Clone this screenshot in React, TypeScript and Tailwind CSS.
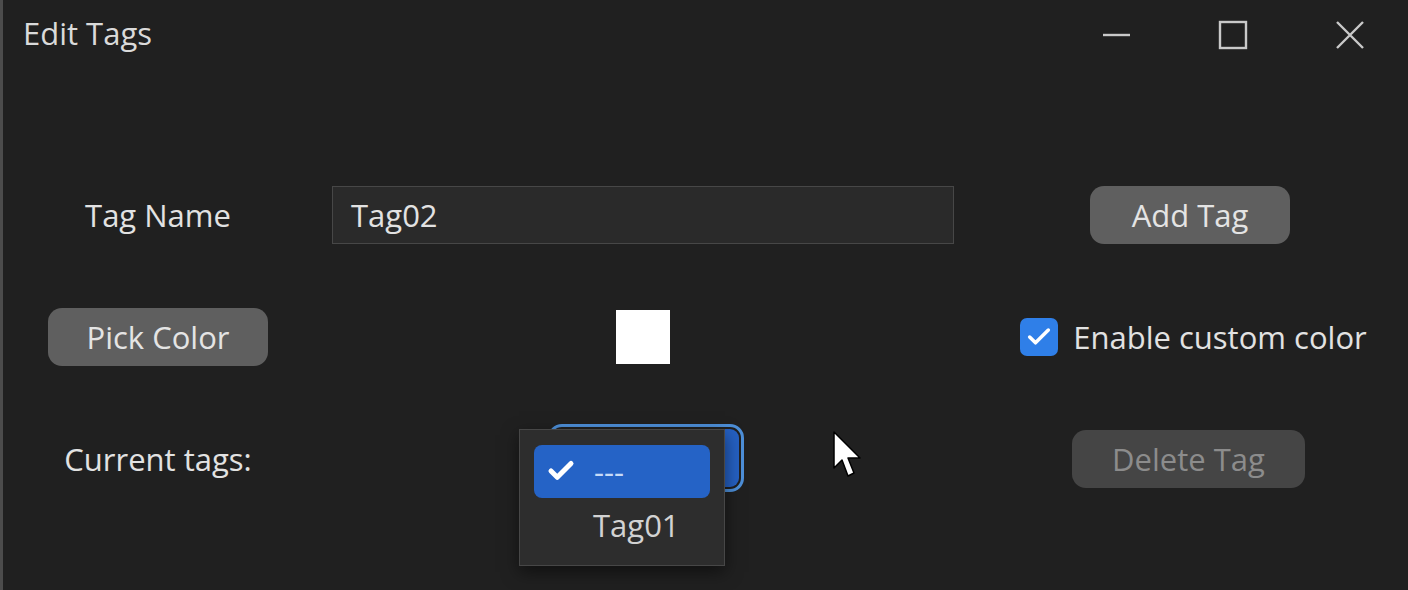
import { Check } from 'lucide-react'

const font = { fontFamily: '"Open Sans", "Noto Sans", sans-serif' }

function WindowControls() {
  return (
    <div className="flex h-full">
      <button className="flex h-full w-[117px] items-center justify-center">
        <svg width="30" height="30" viewBox="0 0 30 30">
          <path d="M2 15h27" stroke="#c9c9c9" strokeWidth="2.4" />
        </svg>
      </button>
      <button className="flex h-full w-[117px] items-center justify-center">
        <svg width="30" height="30" viewBox="0 0 30 30">
          <rect x="2" y="2" width="26" height="26" fill="none" stroke="#c9c9c9" strokeWidth="2.4" />
        </svg>
      </button>
      <button className="flex h-full w-[117px] items-center justify-center">
        <svg width="30" height="30" viewBox="0 0 30 30">
          <path d="M2 2l26 26M28 2L2 28" stroke="#c9c9c9" strokeWidth="2.4" />
        </svg>
      </button>
    </div>
  )
}

export default function App() {
  return (
    <div
      className="flex h-[590px] w-[1408px] flex-col overflow-hidden border-l-[3px] border-[#4c4c4c] bg-[#202020] text-[#e2e2e2]"
      style={font}
    >
      {/* Title bar */}
      <div className="flex h-[70px] items-center justify-between">
        <span className="-mt-[4px] pl-[20px] text-[31px] text-[#dadada]">Edit Tags</span>
        <WindowControls />
      </div>

      {/* Form */}
      <div className="grid grid-cols-[220px_622px_380px] grid-rows-[58px_58px_58px] gap-x-[64px] gap-y-[64px] pl-[45px] pt-[116px] text-[31px]">
        {/* Row 1 */}
        <div className="flex items-center justify-center">Tag Name</div>
        <div className="flex items-center border border-[#474747] bg-[#2a2a2a] px-[18px]">Tag02</div>
        <div className="-ml-[36px] flex items-center justify-center">
          <button className="h-[58px] w-[200px] rounded-[14px] bg-[#5f5f5f] text-[#e4e4e4]">Add Tag</button>
        </div>

        {/* Row 2 */}
        <div>
          <button className="h-[58px] w-[220px] rounded-[14px] bg-[#5f5f5f] text-[#e4e4e4]">Pick Color</button>
        </div>
        <div className="flex items-center justify-center">
          <div className="h-[54px] w-[54px] bg-white" />
        </div>
        <div className="-ml-[29px] flex items-center justify-center gap-[15px]">
          <span className="flex h-[38px] w-[38px] items-center justify-center rounded-[7px] bg-[#2f7fe8]">
            <Check className="h-[28px] w-[28px] text-white" strokeWidth={3} />
          </span>
          <span>Enable custom color</span>
        </div>

        {/* Row 3 */}
        <div className="flex items-center justify-center">Current tags:</div>
        <div className="flex items-center justify-center">
          <div className="relative ml-[6px] -mt-[3px] h-[68px] w-[196px] rounded-[14px] border-[3px] border-[#4d8fd8] p-[2px]">
            <div className="h-full w-full rounded-[9px] bg-[#2560c2]" />
            {/* Open dropdown */}
            <div className="absolute left-[-32px] top-[2px] flex h-[137px] w-[206px] flex-col border border-[#474747] bg-[#2d2d2d] px-[14px] pt-[15px] shadow-[0_6px_16px_rgba(0,0,0,0.5)]">
              <div className="flex h-[53px] items-center rounded-[8px] bg-[#2563c6] pl-[12px]">
                <Check className="h-[30px] w-[30px] text-white" strokeWidth={4} />
                <span className="ml-[18px] text-[#c6dbf7]">---</span>
              </div>
              <div className="flex h-[56px] items-center pl-[59px] text-[#d2d2d2]">Tag01</div>
            </div>
          </div>
        </div>
        <div className="-ml-[39px] flex items-center justify-center">
          <button className="h-[58px] w-[233px] rounded-[14px] bg-[#454545] text-[#8c8c8c]">Delete Tag</button>
        </div>
      </div>

      {/* Mouse cursor */}
      <svg className="absolute left-[832px] top-[430px]" width="32" height="50" viewBox="0 0 32 50">
        <path
          d="M2 2 L2 38 L10 30 L16 46 L22 43 L16 28 L28 28 Z"
          fill="#ffffff"
          stroke="#000000"
          strokeWidth="1.5"
          strokeLinejoin="round"
        />
      </svg>
    </div>
  )
}
